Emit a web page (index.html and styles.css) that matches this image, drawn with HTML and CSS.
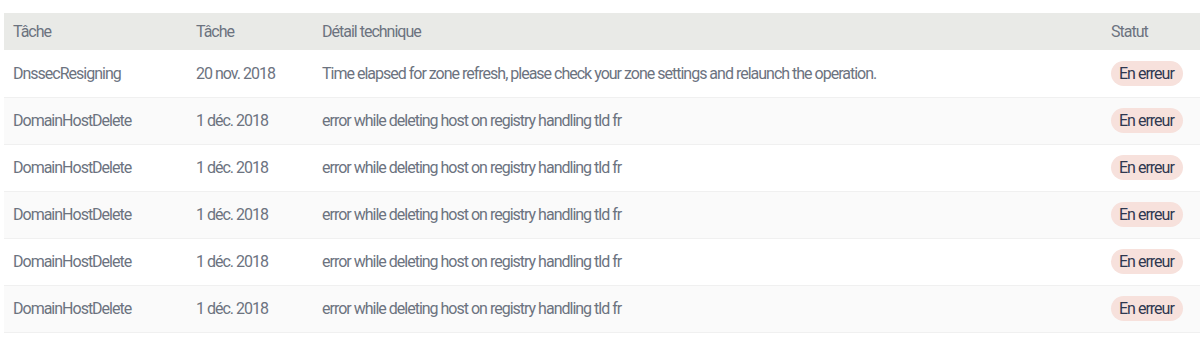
FILE: index.html
```html
<html>
    <head>
        <title>Tâches</title>
        <link rel="stylesheet" href="styles.css">
    </head>
    <body>
        <table class="tasks">
            <thead>
                <tr>
                    <th class="col-name">Tâche</th>
                    <th class="col-date">Tâche</th>
                    <th>Détail technique</th>
                    <th class="col-status">Statut</th>
                </tr>
            </thead>
            <tbody>
                <tr>
                    <td>DnssecResigning</td>
                    <td>20 nov. 2018</td>
                    <td>Time elapsed for zone refresh, please check your zone settings and relaunch the operation.</td>
                    <td><span class="badge">En erreur</span></td>
                </tr>
                <tr>
                    <td>DomainHostDelete</td>
                    <td>1 déc. 2018</td>
                    <td>error while deleting host on registry handling tld fr</td>
                    <td><span class="badge">En erreur</span></td>
                </tr>
                <tr>
                    <td>DomainHostDelete</td>
                    <td>1 déc. 2018</td>
                    <td>error while deleting host on registry handling tld fr</td>
                    <td><span class="badge">En erreur</span></td>
                </tr>
                <tr>
                    <td>DomainHostDelete</td>
                    <td>1 déc. 2018</td>
                    <td>error while deleting host on registry handling tld fr</td>
                    <td><span class="badge">En erreur</span></td>
                </tr>
                <tr>
                    <td>DomainHostDelete</td>
                    <td>1 déc. 2018</td>
                    <td>error while deleting host on registry handling tld fr</td>
                    <td><span class="badge">En erreur</span></td>
                </tr>
                <tr>
                    <td>DomainHostDelete</td>
                    <td>1 déc. 2018</td>
                    <td>error while deleting host on registry handling tld fr</td>
                    <td><span class="badge">En erreur</span></td>
                </tr>
            </tbody>
        </table>
    </body>
</html>
```
FILE: styles.css
```css
body {
    margin: 0;
    background: #fff;
    font-family: 'Roboto', sans-serif;
    font-size: 12px;
    letter-spacing: -1px;
    color: #6c737f;
}

.tasks {
    margin: 13px 0 0 4px;
    width: calc(100% - 4px);
    border-collapse: collapse;
    table-layout: fixed;
}

.tasks th {
    background-color: #e9eae7;
    font-weight: normal;
    text-align: left;
    height: 37px;
    padding: 0 9px;
}

.tasks td {
    height: 47px;
    padding: 0 9px;
    border-bottom: 1px solid #f0f0f0;
    white-space: nowrap;
}

.tasks tbody tr:nth-child(even) td {
    background-color: #fafafa;
}

.col-name {
    width: 165px;
}

.col-date {
    width: 108px;
}

.col-status {
    width: 80px;
}

.badge {
    display: inline-block;
    background-color: #f7e1dc;
    color: #2f3850;
    padding: 0 9px 0 8px;
    line-height: 25px;
    border-radius: 13px;
}
```
